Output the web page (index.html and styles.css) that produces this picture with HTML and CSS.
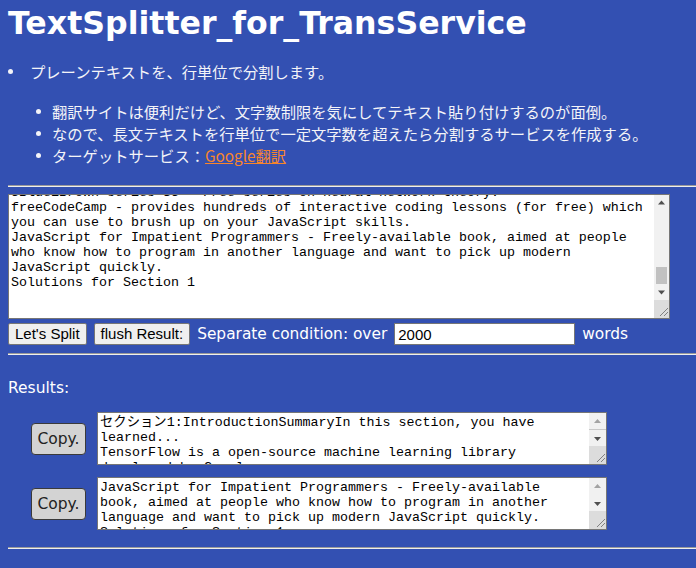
FILE: index.html
```html
<!DOCTYPE html>
<html lang="ja">
<head>
<meta charset="utf-8">
<title>TextSplitter_for_TransService</title>
<link rel="stylesheet" href="styles.css">
</head>
<body>
<h1 class="title">TextSplitter_for_TransService</h1>
<ul class="intro">
  <li><span>プレーンテキストを、行単位で分割します。</span></li>
</ul>
<ul class="notes">
  <li><span>翻訳サイトは便利だけど、文字数制限を気にしてテキスト貼り付けするのが面倒。</span></li>
  <li><span>なので、長文テキストを行単位で一定文字数を超えたら分割するサービスを作成する。</span></li>
  <li><span>ターゲットサービス：<a class="link" href="#">Google翻訳</a></span></li>
</ul>
<hr class="rule rule-top">
<div class="field field-source">
<textarea class="source" spellcheck="false">セクション1:Introduction
Summary
In this section, you have learned...
TensorFlow is a open-source machine learning library developed by Google.
It is used for both research and production at Google.

Resources
TensorFlow.js - JavaScript library for training and deploying ML models.
ml5.js - Friendly machine learning for the web.
Deep Learning with JavaScript - Book by the TensorFlow.js team.
Neural Networks and Deep Learning - Free online book by Michael Nielsen.
3Blue1Brown series S3 - Free series on neural network theory.
freeCodeCamp - provides hundreds of interactive coding lessons (for free) which
you can use to brush up on your JavaScript skills.
JavaScript for Impatient Programmers - Freely-available book, aimed at people
who know how to program in another language and want to pick up modern
JavaScript quickly.
Solutions for Section 1










</textarea>
  <div class="vscroll vscroll-main">
    <div class="sb-btn"><svg width="15" height="15" viewBox="0 0 15 15"><path d="M4 9.5h7L7.5 5.5z" fill="#505050"/></svg></div>
    <div class="sb-track"><div class="sb-thumb"></div></div>
    <div class="sb-btn"><svg width="15" height="15" viewBox="0 0 15 15"><path d="M4 5.5h7L7.5 9.5z" fill="#505050"/></svg></div>
    <div class="sb-corner"><svg width="15" height="18" viewBox="0 0 15 18"><path d="M14 8L6 16M14 12L10 16" stroke="#808080" stroke-width="1" fill="none"/></svg></div>
  </div>
</div>
<div class="controls">
  <button class="btn" type="button">Let's Split</button>
  <button class="btn" type="button">flush Result:</button>
  <span class="label">Separate condition: over</span>
  <input class="limit" type="text" value="2000">
  <span class="label">words</span>
</div>
<hr class="rule rule-mid">
<div class="results-label">Results:</div>
<div class="results">
  <div class="result-row">
    <button class="copy" type="button">Copy.</button>
    <div class="field field-result">
<textarea class="result" spellcheck="false">セクション1:IntroductionSummaryIn this section, you have
learned...
TensorFlow is a open-source machine learning library
developed by Google.</textarea>
      <div class="vscroll vscroll-small">
        <div class="sb-btn sb-btn-small"><svg width="17" height="16" viewBox="0 0 17 16"><path d="M5 10h7L8.5 6z" fill="#a3a3a3"/></svg></div>
        <div class="sb-track sb-track-line"></div>
        <div class="sb-btn sb-btn-small"><svg width="17" height="16" viewBox="0 0 17 16"><path d="M5 7h7L8.5 11z" fill="#505050"/></svg></div>
        <div class="sb-corner sb-corner-small"><svg width="17" height="18" viewBox="0 0 17 18"><path d="M16 8L8 16M16 12L12 16" stroke="#808080" stroke-width="1" fill="none"/></svg></div>
      </div>
    </div>
  </div>
  <div class="result-row">
    <button class="copy" type="button">Copy.</button>
    <div class="field field-result">
<textarea class="result" spellcheck="false">JavaScript for Impatient Programmers - Freely-available
book, aimed at people who know how to program in another
language and want to pick up modern JavaScript quickly.
Solutions for Section 1</textarea>
      <div class="vscroll vscroll-small">
        <div class="sb-btn sb-btn-small"><svg width="17" height="16" viewBox="0 0 17 16"><path d="M5 10h7L8.5 6z" fill="#a3a3a3"/></svg></div>
        <div class="sb-track"></div>
        <div class="sb-btn sb-btn-small"><svg width="17" height="16" viewBox="0 0 17 16"><path d="M5 7h7L8.5 11z" fill="#505050"/></svg></div>
        <div class="sb-corner sb-corner-small"><svg width="17" height="18" viewBox="0 0 17 18"><path d="M16 8L8 16M16 12L12 16" stroke="#808080" stroke-width="1" fill="none"/></svg></div>
      </div>
    </div>
  </div>
</div>
<hr class="rule rule-bottom">
<script src="script.js"></script>
</body>
</html>
```

FILE: styles.css
```css
* { box-sizing: border-box; }

html { background: #3350b2; }

body {
  margin: 0;
  padding: 5px 0 0 8px;
  background: #3350b2;
  color: #ffffff;
  font-family: "DejaVu Sans", "Noto Sans CJK JP", sans-serif;
  font-size: 15.5px;
}

.title {
  margin: 0;
  font: bold 31.6px/36px "DejaVu Sans", sans-serif;
  color: #ffffff;
}

.intro, .notes {
  list-style: none;
  font: 15.3px/22px "Noto Sans CJK JP", sans-serif;
  color: #f4f4f8;
}

.intro { margin: 19px 0 0; padding: 0; }
.notes { margin: 18px 0 0; padding: 0 0 0 28px; }

.intro li, .notes li {
  display: flex;
  align-items: center;
}

.intro li::before, .notes li::before {
  content: "";
  flex: none;
  width: 5px;
  height: 5px;
  border-radius: 50%;
  background: #f4f4f8;
}

.intro li::before { margin-right: 17px; }
.notes li::before { margin-right: 11px; }

.link { color: #f7852c; text-decoration: underline; }

.rule {
  display: block;
  height: 0;
  margin: 0;
  border: 0;
  border-top: 1px solid #9a9a9a;
  border-bottom: 1px solid #eeeeee;
}

.rule-top { margin-top: 19px; }
.rule-mid { margin-top: 8px; }
.rule-bottom { margin-top: 17px; }

.field { position: relative; }

.field-source { width: 662px; height: 125px; margin-top: 7px; }
.field-result { width: 510px; height: 53px; }

.source, .result {
  display: block;
  width: 100%;
  height: 100%;
  margin: 0;
  border: 1px solid #767676;
  background: #ffffff;
  color: #000000;
  font-family: "Liberation Mono", "Noto Sans CJK JP", monospace;
  font-size: 13.333px;
  line-height: 15px;
  overflow: hidden;
  resize: none;
  white-space: pre-wrap;
  outline: none;
}

.source { padding: 2px 15px 2px 2px; }
.result { padding: 2px 17px 2px 2px; }

.vscroll {
  position: absolute;
  top: 1px;
  right: 1px;
  bottom: 1px;
  display: flex;
  flex-direction: column;
  background: #f1f1f1;
  pointer-events: none;
}

.vscroll-main { width: 15px; }
.vscroll-small { width: 17px; }

.sb-btn { flex: none; height: 15px; display: flex; }
.sb-btn svg { display: block; }
.sb-btn-small { height: 16px; }

.sb-track { flex: 1; display: flex; flex-direction: column; }

.sb-thumb {
  margin: 57px 2px 0;
  height: 17px;
  background: #c1c1c1;
}

.sb-track-line { border-top: 1px solid #c8c8c8; }

.sb-corner { flex: none; height: 18px; background: #dcdcdc; }
.sb-corner svg { display: block; }

.controls {
  display: flex;
  align-items: center;
  gap: 7px;
  margin-top: 4px;
  height: 22px;
}

.btn {
  height: 22px;
  margin: 0;
  padding: 0 6px;
  border: 1px solid #767676;
  border-radius: 2px;
  background: #efefef;
  color: #000000;
  font: 15px/20px "Liberation Sans", Arial, sans-serif;
}

.label {
  font: 15.4px/22px "DejaVu Sans", sans-serif;
  color: #ffffff;
}

.limit {
  width: 181px;
  height: 22px;
  margin: 0;
  padding: 1px 3px;
  border: 1px solid #767676;
  background: #ffffff;
  color: #000000;
  font: 15px "Liberation Sans", Arial, sans-serif;
}

.results-label {
  margin-top: 23px;
  line-height: 20px;
  font-size: 15.5px;
}

.results {
  display: flex;
  flex-direction: column;
  gap: 12px;
  margin-top: 14px;
}

.result-row {
  display: flex;
  align-items: center;
  gap: 11px;
  padding-left: 23px;
}

.copy {
  width: 55px;
  height: 32px;
  margin: 0;
  padding: 0;
  border: 1px solid #3a3a3a;
  border-radius: 4px;
  background: #d3d3d3;
  color: #222222;
  font: 15.5px "DejaVu Sans", sans-serif;
}
```

FILE: script.js
```js
var source = document.querySelector('.source');
if (source) {
  source.scrollTop = 12 * 15 - 3;
}
```
